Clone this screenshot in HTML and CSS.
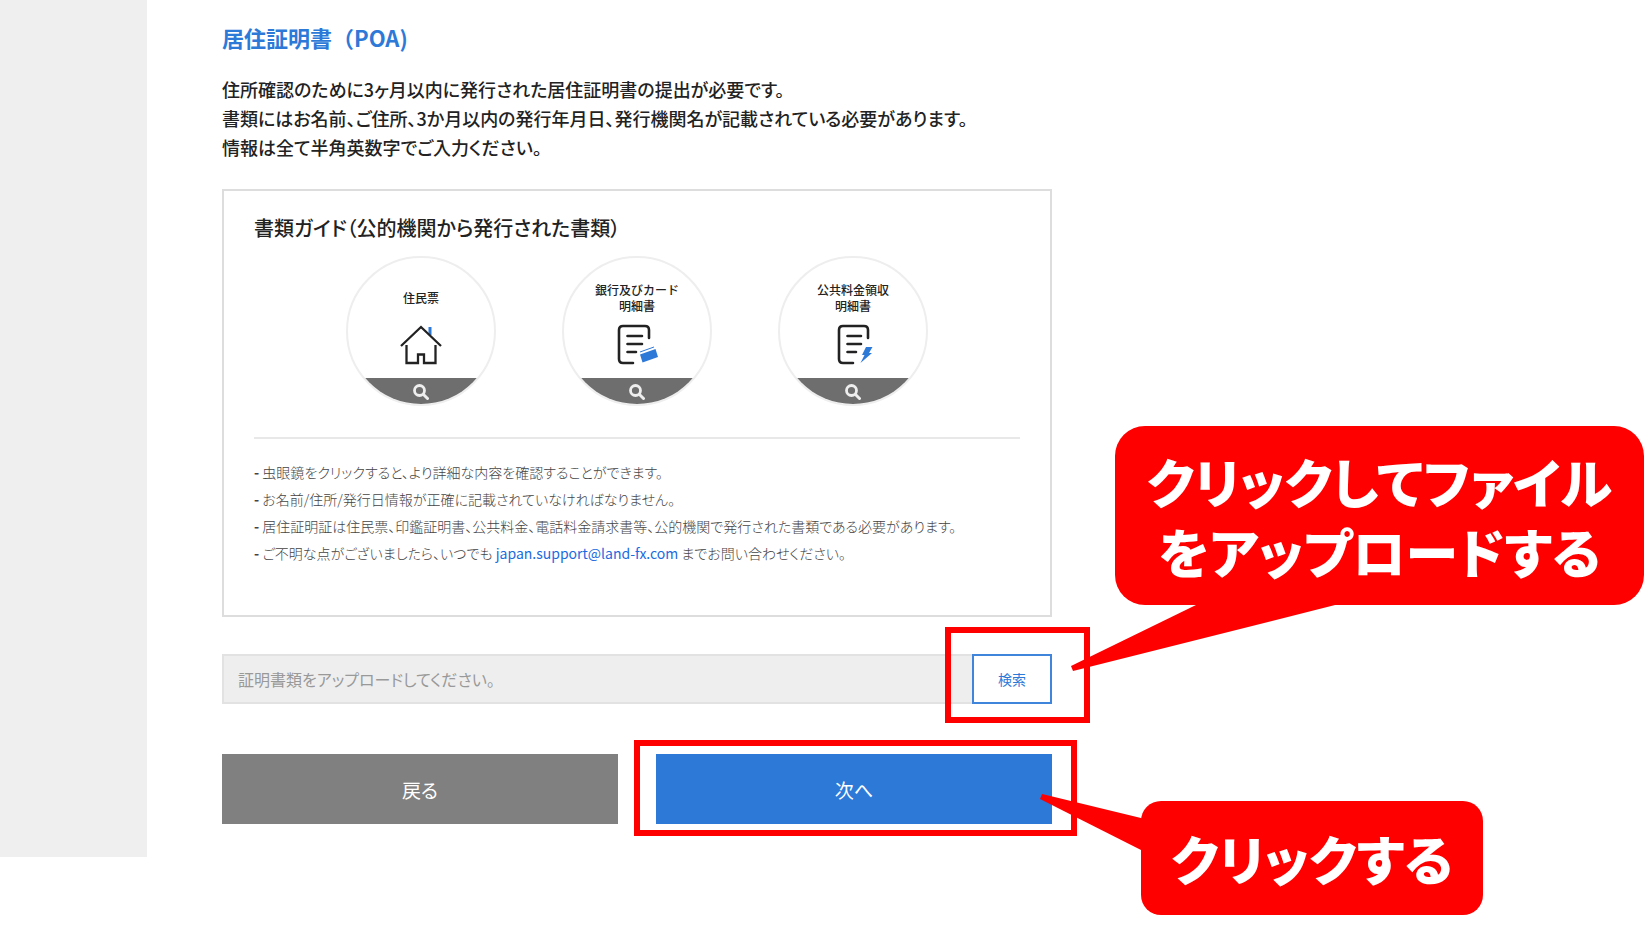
FILE: index.html
```html
<!DOCTYPE html>
<html lang="ja">
<head>
<meta charset="utf-8">
<title>居住証明書（POA)</title>
<link rel="stylesheet" href="styles.css">
</head>
<body>
<div class="page">
  <aside class="sidebar"></aside>
  <main class="content">
    <h1 class="title">居住証明書（POA)</h1>
    <p class="lead">住所確認のために3ヶ月以内に発行された居住証明書の提出が必要です。<br>書類にはお名前、ご住所、3か月以内の発行年月日、発行機関名が記載されている必要があります。<br>情報は全て半角英数字でご入力ください。</p>

    <section class="guide">
      <h2 class="guide-title">書類ガイド（公的機関から発行された書類）</h2>
      <div class="docs">
        <button type="button" class="doc">
          <span class="doc-label">住民票</span>
          <svg class="doc-icon" viewBox="0 0 42 42" fill="none" stroke="#222" stroke-width="2.300">
            <path d="M30 3v8" stroke="#2d79d8" stroke-width="3"/>
            <path d="M1 22L21 3l20 19M6.500 21v18H18v-8.500h6V39h11.500V21"/>
          </svg>
          <span class="doc-zoom"><svg class="lens" viewBox="0 0 16 16" fill="none" stroke="#eee"><circle cx="6.500" cy="6.500" r="5" stroke-width="2.800"/><path d="M10.500 10.500l4 4" stroke-width="3" stroke-linecap="round"/></svg></span>
        </button>
        <button type="button" class="doc">
          <span class="doc-label">銀行及びカード<br>明細書</span>
          <svg class="doc-icon" viewBox="0 0 42 42" fill="none" stroke="#222" stroke-width="2.600" stroke-linecap="round">
            <path d="M33 14V6q0-4-4-4H7Q3 2 3 6v29q0 4 4 4h10M11.500 12H26M11.500 20H26M11.500 28H20"/>
            <path d="M24 28l14-5" stroke="#2d79d8" stroke-width="1" stroke-linecap="butt"/>
            <path d="M24 30.500L39.500 25l2.500 8-15.500 5.500z" fill="#2d79d8" stroke="none"/>
          </svg>
          <span class="doc-zoom"><svg class="lens" viewBox="0 0 16 16" fill="none" stroke="#eee"><circle cx="6.500" cy="6.500" r="5" stroke-width="2.800"/><path d="M10.500 10.500l4 4" stroke-width="3" stroke-linecap="round"/></svg></span>
        </button>
        <button type="button" class="doc">
          <span class="doc-label">公共料金領収<br>明細書</span>
          <svg class="doc-icon" viewBox="0 0 42 42" fill="none" stroke="#222" stroke-width="2.600" stroke-linecap="round">
            <path d="M36 14V6q0-4-4-4H11Q7 2 7 6v29q0 4 4 4h10M15.500 12H29M15.500 20H29M15.500 28H24"/>
            <path d="M34 23h6.500L37 29h3L28.500 39l4-8H30z" fill="#2d79d8" stroke="none"/>
          </svg>
          <span class="doc-zoom"><svg class="lens" viewBox="0 0 16 16" fill="none" stroke="#eee"><circle cx="6.500" cy="6.500" r="5" stroke-width="2.800"/><path d="M10.500 10.500l4 4" stroke-width="3" stroke-linecap="round"/></svg></span>
        </button>
      </div>
      <ul class="notes">
        <li>虫眼鏡をクリックすると、より詳細な内容を確認することができます。</li>
        <li>お名前/住所/発行日情報が正確に記載されていなければなりません。</li>
        <li>居住証明証は住民票、印鑑証明書、公共料金、電話料金請求書等、公的機関で発行された書類である必要があります。</li>
        <li>ご不明な点がございましたら、いつでも <a class="mail" href="mailto:japan.support@land-fx.com">japan.support@land-fx.com</a> までお問い合わせください。</li>
      </ul>
    </section>

    <div class="upload">
      <input class="file-name" type="text" aria-label="証明書類" placeholder="証明書類をアップロードしてください。" readonly>
      <button type="button" class="search">検索</button>
    </div>
    <div class="actions">
      <button type="button" class="action back">戻る</button>
      <button type="button" class="action next">次へ</button>
    </div>
  </main>

  <div class="frame frame-search"></div>
  <div class="frame frame-next"></div>
  <svg class="tails" viewBox="0 0 1648 928" fill="#f00">
    <path d="M1196 605L1071 666l2 5L1339 604z"/>
    <path d="M1143 818.500L1042 794l-2 5 103 52z"/>
  </svg>
  <div class="callout callout-upload">クリックしてファイル<br>をアップロードする</div>
  <div class="callout callout-click">クリックする</div>
</div>
</body>
</html>
```

FILE: styles.css
```css
* {
  box-sizing: border-box;
}

body {
  margin: 0;
  background: #fff;
  color: #222;
  font-family: "Noto Sans CJK JP", sans-serif;
  font-feature-settings: "palt";
}

button,
input {
  font: inherit;
  font-feature-settings: inherit;
  border-radius: 0;
}

h1, h2, p, ul {
  margin: 0;
}

.page {
  position: relative;
  display: flex;
  align-items: flex-start;
  min-height: 100vh;
}

.sidebar {
  align-self: stretch;
  flex: none;
  width: 147px;
  margin-bottom: 71px;
  background: #efefef;
}

.content {
  width: 905px;
  padding: 20px 0 0 75px;
}

.title {
  color: #2d79d8;
  font-size: 22px;
  font-weight: 700;
  line-height: 34px;
  font-feature-settings: normal;
}

.lead {
  margin-top: 21px;
  font-size: 18px;
  font-weight: 500;
  line-height: 29px;
  white-space: nowrap;
}

.guide {
  margin-top: 27px;
  padding: 21px 30px 48px;
  border: 2px solid #ddd;
}

.guide-title {
  font-size: 20px;
  font-weight: 500;
  line-height: 32px;
}

.docs {
  display: flex;
  justify-content: center;
  gap: 66px;
  padding: 12px 0 31px;
  border-bottom: 2px solid #e8e8e8;
}

.doc {
  position: relative;
  display: flex;
  flex-direction: column;
  align-items: center;
  width: 150px;
  height: 150px;
  padding: 0;
  overflow: hidden;
  border: 2px solid #eee;
  border-radius: 50%;
  background: #fff;
  color: #222;
}

.doc-label {
  display: flex;
  flex-direction: column;
  align-items: center;
  justify-content: center;
  height: 32px;
  margin-top: 24px;
  font-size: 12px;
  font-weight: 500;
  line-height: 16px;
  font-feature-settings: normal;
}

.doc-icon {
  width: 42px;
  height: 42px;
  margin-top: 10px;
}

.doc-zoom {
  position: absolute;
  right: -2px;
  bottom: -2px;
  left: -2px;
  display: flex;
  justify-content: center;
  height: 28px;
  padding-top: 6px;
  background: #6e6e6e;
}

.lens {
  width: 16px;
  height: 16px;
}

.notes {
  padding: 20px 0 0;
  list-style: none;
  color: #444;
  font-size: 14px;
  font-weight: 300;
  line-height: 27px;
  white-space: nowrap;
}

.notes li::before {
  content: "- ";
  font-weight: 700;
}

.mail {
  color: #1a6be0;
  font-weight: 400;
  text-decoration: none;
}

.upload {
  display: flex;
  height: 50px;
  margin-top: 37px;
}

.file-name {
  flex: 1;
  min-width: 0;
  padding: 0 14px;
  border: 2px solid #e2e2e2;
  border-right: 0;
  background: #eee;
  font-size: 16px;
}

.file-name::placeholder {
  color: #999;
  opacity: 1;
}

.search {
  width: 80px;
  padding: 0;
  border: 2px solid #3f85db;
  background: #fff;
  color: #2d79d8;
  font-size: 14px;
}

.actions {
  display: grid;
  grid-template-columns: 1fr 1fr;
  gap: 38px;
  margin-top: 50px;
}

.action {
  height: 70px;
  padding: 0;
  border: 0;
  color: #fff;
  font-size: 19px;
}

.back {
  background: #808080;
}

.next {
  background: #2d79d8;
}

/* Annotations laid over the form */
.frame {
  position: absolute;
  height: 96px;
  border: 6px solid #f00;
}

.frame-search {
  top: 627px;
  left: 945px;
  width: 145px;
}

.frame-next {
  top: 740px;
  left: 634px;
  width: 443px;
}

.tails {
  position: absolute;
  top: 0;
  left: 0;
  width: 1648px;
  height: 928px;
  pointer-events: none;
}

.callout {
  position: absolute;
  display: flex;
  align-items: center;
  justify-content: center;
  background: #f00;
  color: #fff;
  font-size: 53px;
  font-weight: 900;
  line-height: 70px;
  text-align: center;
  white-space: nowrap;
}

.callout-upload {
  top: 426px;
  left: 1115px;
  width: 529px;
  height: 179px;
  border-radius: 30px;
}

.callout-click {
  top: 801px;
  left: 1141px;
  width: 342px;
  height: 114px;
  border-radius: 20px;
}
```
